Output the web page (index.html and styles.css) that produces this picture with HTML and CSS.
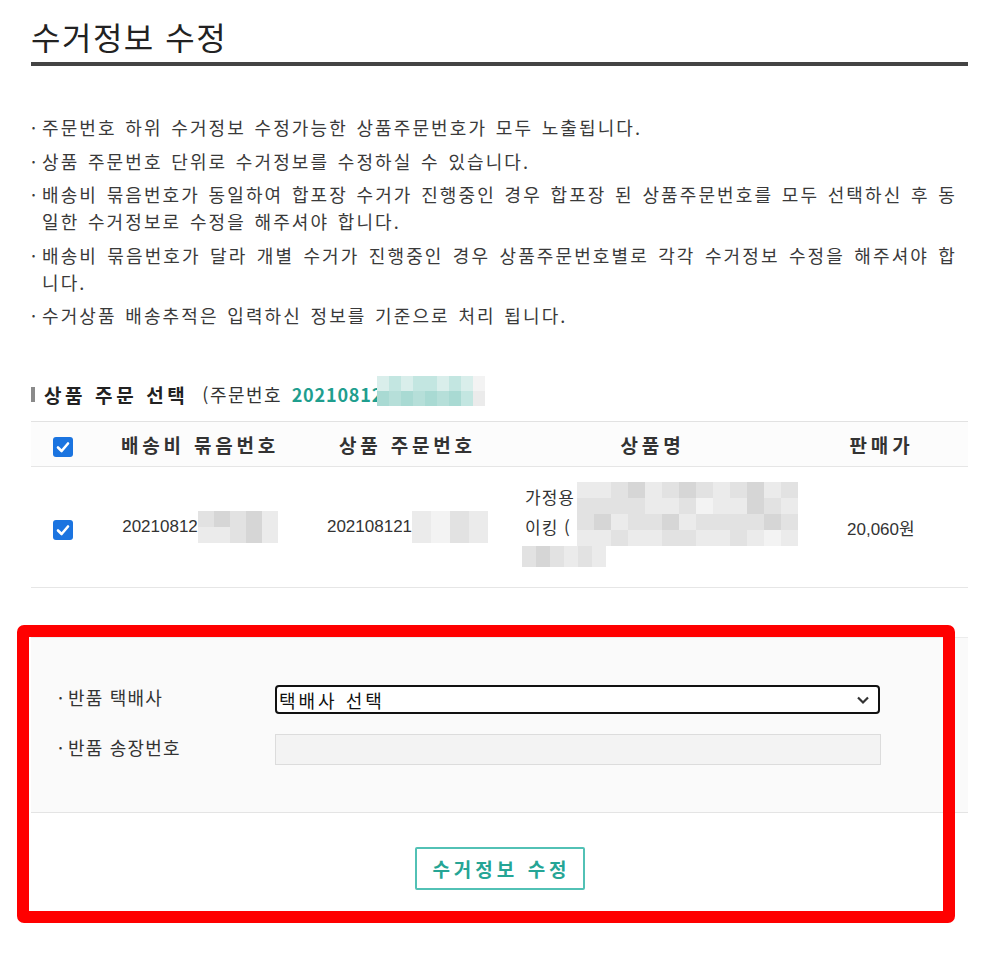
FILE: index.html
```html
<!DOCTYPE html>
<html lang="ko">
<head>
<meta charset="utf-8">
<title>수거정보 수정</title>
<link rel="stylesheet" href="styles.css">
</head>
<body>
<div class="page">
  <h1 class="title">수거정보 수정</h1>

  <ul class="notice">
    <li>주문번호 하위 수거정보 수정가능한 상품주문번호가 모두 노출됩니다.</li>
    <li>상품 주문번호 단위로 수거정보를 수정하실 수 있습니다.</li>
    <li><span class="full-line">배송비 묶음번호가 동일하여 합포장 수거가 진행중인 경우 합포장 된 상품주문번호를 모두 선택하신 후 동</span>일한 수거정보로 수정을 해주셔야 합니다.</li>
    <li><span class="full-line">배송비 묶음번호가 달라 개별 수거가 진행중인 경우 상품주문번호별로 각각 수거정보 수정을 해주셔야 합</span>니다.</li>
    <li>수거상품 배송추적은 입력하신 정보를 기준으로 처리 됩니다.</li>
  </ul>

  <h2 class="section-head">
    <span class="head-bar"></span>
    <span class="head-title">상품 주문 선택</span>
    <span class="order">(주문번호 <b class="order-no">20210812</b></span>
    <span class="mosaic mosaic-order">
      <i class="t1"></i><i class="t3"></i>
      <i class="t2"></i><i class="t4"></i>
      <i class="t1"></i><i class="t3"></i>
      <i class="t2"></i><i class="t4"></i>
      <i class="t2"></i><i class="t3"></i>
      <i class="t1"></i><i class="t4"></i>
      <i class="t2"></i><i class="t3"></i>
      <i class="t1"></i><i class="t2"></i>
      <i class="g0"></i><i class="g1"></i>
    </span>
  </h2>

  <table class="items">
    <colgroup>
      <col class="c-chk"><col class="c-bundle"><col class="c-order"><col class="c-name"><col class="c-price">
    </colgroup>
    <thead>
      <tr>
        <th><span class="chk"><svg viewBox="0 0 20 20" width="20" height="20"><path d="M5 10.5 L8.6 14 L15 6.5" fill="none" stroke="#fff" stroke-width="2.6" stroke-linecap="round" stroke-linejoin="round"/></svg></span></th>
        <th>배송비 묶음번호</th>
        <th>상품 주문번호</th>
        <th>상품명</th>
        <th>판매가</th>
      </tr>
    </thead>
    <tbody>
      <tr>
        <td><span class="chk"><svg viewBox="0 0 20 20" width="20" height="20"><path d="M5 10.5 L8.6 14 L15 6.5" fill="none" stroke="#fff" stroke-width="2.6" stroke-linecap="round" stroke-linejoin="round"/></svg></span></td>
        <td><span class="num">20210812</span><span class="mosaic mosaic-bundle">
          <i class="g2"></i><i class="g1"></i>
          <i class="g3"></i><i class="g1"></i>
          <i class="g2"></i><i class="g2"></i>
          <i class="g3"></i><i class="g3"></i>
          <i class="g1"></i><i class="g1"></i>
        </span></td>
        <td><span class="num">202108121</span><span class="mosaic mosaic-ord">
          <i class="g1"></i><i class="g1"></i>
          <i class="g0"></i><i class="g0"></i>
          <i class="g2"></i><i class="g2"></i>
          <i class="g1"></i><i class="g1"></i>
        </span></td>
        <td class="name-cell">
          <div class="name-box">가정용<br>이킹 (<br>&nbsp;
            <span class="mosaic mosaic-name">
              <i class="g1"></i><i class="g2"></i><i class="g2"></i><i class="g1"></i>
              <i class="g1"></i><i class="g2"></i><i class="g3"></i><i class="g1"></i>
              <i class="g2"></i><i class="g2"></i><i class="g1"></i><i class="g2"></i>
              <i class="g3"></i><i class="g2"></i><i class="g2"></i><i class="g1"></i>
              <i class="g1"></i><i class="g1"></i><i class="g2"></i><i class="g1"></i>
              <i class="g2"></i><i class="g1"></i><i class="g3"></i><i class="g2"></i>
              <i class="g3"></i><i class="g2"></i><i class="g1"></i><i class="g2"></i>
              <i class="g2"></i><i class="g0"></i><i class="g2"></i><i class="g1"></i>
              <i class="g1"></i><i class="g1"></i><i class="g2"></i><i class="g1"></i>
              <i class="g2"></i><i class="g1"></i><i class="g2"></i><i class="g2"></i>
              <i class="g3"></i><i class="g3"></i><i class="g2"></i><i class="g1"></i>
              <i class="g1"></i><i class="g2"></i><i class="g3"></i><i class="g0"></i>
              <i class="g2"></i><i class="g1"></i><i class="g2"></i><i class="g1"></i>
            </span>
            <span class="mosaic mosaic-name3">
              <i class="g2"></i><i class="g3"></i><i class="g2"></i><i class="g1"></i><i class="g2"></i><i class="g1"></i>
            </span>
          </div>
        </td>
        <td class="price">20,060원</td>
      </tr>
    </tbody>
  </table>

  <div class="form-area">
    <div class="form-panel">
      <div class="form-row">
        <label class="form-label" for="courier">반품 택배사</label>
        <div class="select-box" id="courier">
          <span>택배사 선택</span>
          <svg class="chevron" viewBox="0 0 14 10" width="14" height="10"><path d="M2 2.5 L7 7.5 L12 2.5" fill="none" stroke="#333" stroke-width="2.2"/></svg>
        </div>
      </div>
      <div class="form-row">
        <label class="form-label" for="invoice">반품 송장번호</label>
        <div class="input-box" id="invoice"></div>
      </div>
    </div>
    <div class="form-actions">
      <button class="btn-submit" type="button">수거정보 수정</button>
    </div>
    <div class="annotation"></div>
  </div>
</div>
</body>
</html>
```

FILE: styles.css
```css
* { box-sizing: border-box; }

body {
  margin: 0;
  background: #fff;
  color: #333;
  font-family: "Noto Sans CJK KR", "Noto Sans", sans-serif;
}

.page {
  width: 937px;
  margin-left: 31px;
  padding-top: 16px;
}

.title {
  margin: 0;
  font-size: 32px;
  font-weight: 400;
  letter-spacing: 1.5px;
  line-height: 40px;
  color: #222;
  padding-bottom: 6px;
  border-bottom: 4px solid #444;
}

.notice {
  list-style: none;
  margin: 48px 0 0 0;
  padding: 0 11px 0 11px;
  font-size: 18px;
  line-height: 27px;
  letter-spacing: 2.1px;
  word-spacing: 1.5px;
  color: #3a3a3a;
}

.notice li {
  position: relative;
  margin-bottom: 6.5px;
}

.notice li::before {
  content: "·";
  position: absolute;
  left: -11px;
  top: 0;
}

.full-line {
  display: block;
  text-align: justify;
  text-align-last: justify;
}

.section-head {
  margin: 50px 0 0 0;
  display: flex;
  align-items: center;
  height: 30px;
  font-size: 19px;
  font-weight: 400;
}

.head-bar {
  width: 4px;
  height: 15px;
  background: #8a8a8a;
  margin-right: 9px;
}

.head-title {
  font-weight: 700;
  letter-spacing: 3.6px;
  color: #222;
}

.order {
  margin-left: 14px;
  font-size: 18px;
  letter-spacing: 1.5px;
  color: #333;
}

.order-no {
  color: #1f9e8e;
  font-weight: 700;
  letter-spacing: 0.8px;
  margin-left: 3px;
}

.mosaic {
  display: inline-grid;
  grid-auto-flow: column;
  vertical-align: middle;
}

.mosaic i { display: block; }

.mosaic-order {
  grid-template-rows: repeat(2, 15px);
  grid-auto-columns: 12px;
  margin-top: -6px;
  margin-left: -6px;
}

.t1 { background: #d9eeeb; }
.t2 { background: #c3e6e1; }
.t3 { background: #a9dad3; }
.t4 { background: #b6dfd9; }
.g0 { background: #f3f3f3; }
.g1 { background: #ebebeb; }
.g2 { background: #e2e2e2; }
.g3 { background: #d6d6d6; }

.items {
  margin-top: 12px;
  width: 100%;
  border-collapse: collapse;
  table-layout: fixed;
}

.c-chk { width: 64px; }
.c-bundle { width: 210px; }
.c-order { width: 205px; }
.c-name { width: 285px; }
.c-price { width: 173px; }

.items th {
  height: 45px;
  background: #fcfcfc;
  border-top: 1px solid #e2e2e2;
  border-bottom: 1px solid #e6e6e6;
  font-size: 19px;
  font-weight: 700;
  letter-spacing: 3.8px;
  color: #333;
  text-align: center;
  vertical-align: middle;
  padding: 0;
}

.items td {
  height: 121px;
  border-bottom: 1px solid #e6e6e6;
  text-align: center;
  vertical-align: middle;
  padding: 0;
  font-size: 17px;
  color: #333;
}

.chk {
  display: inline-block;
  width: 20px;
  height: 20px;
  border-radius: 3px;
  background: #1b74e0;
  vertical-align: middle;
}

.chk svg { display: block; }

.num {
  font-family: "Liberation Sans", "Noto Sans", sans-serif;
  font-size: 17px;
  vertical-align: middle;
}

.mosaic-bundle {
  grid-template-rows: repeat(2, 16px);
  grid-auto-columns: 16px;
}

.mosaic-ord {
  grid-template-rows: repeat(2, 16px);
  grid-auto-columns: 19px;
}

.name-cell {
  text-align: left !important;
  padding-left: 15px !important;
}

.name-box {
  position: relative;
  line-height: 30px;
  font-size: 17px;
  letter-spacing: 1px;
}

.mosaic-name {
  position: absolute;
  left: 52px;
  top: 0;
  grid-template-rows: repeat(4, 16px);
  grid-auto-columns: 17px;
}

.mosaic-name3 {
  position: absolute;
  left: -3px;
  top: 64px;
  grid-template-rows: 21px;
  grid-auto-columns: 14px;
}

.price {
  font-family: "Liberation Sans", "Noto Sans CJK KR", sans-serif;
  text-align: left !important;
  padding-left: 52px !important;
}

.form-area {
  position: relative;
  margin-top: 49px;
}

.form-panel {
  background: #fafafa;
  border-top: 1px solid #ececec;
  border-bottom: 1px solid #e4e4e4;
  padding: 47px 88px 47px 27px;
  display: flex;
  flex-direction: column;
  gap: 20px;
}

.form-row {
  display: flex;
  align-items: center;
}

.form-label {
  width: 217px;
  font-size: 18px;
  letter-spacing: 1.2px;
  color: #333;
  margin-top: -6px;
}

.form-label::before {
  content: "·";
  display: inline-block;
  width: 10px;
}

.select-box {
  flex: 1;
  height: 29px;
  border: 2px solid #111;
  border-radius: 4px;
  background: #fff;
  display: flex;
  align-items: center;
  justify-content: space-between;
  padding: 0 8px 0 2px;
  font-size: 18px;
  letter-spacing: 3px;
  color: #111;
}

.input-box {
  flex: 1;
  height: 31px;
  background: #f3f3f3;
  border: 1px solid #dcdcdc;
  margin-right: -1px;
}

.form-actions {
  display: flex;
  justify-content: center;
  padding: 34px 0 33px;
}

.btn-submit {
  width: 170px;
  height: 43px;
  background: #fff;
  border: 2px solid #52c1b5;
  border-radius: 2px;
  color: #25a595;
  font-family: "Noto Sans CJK KR", sans-serif;
  font-size: 19px;
  font-weight: 700;
  letter-spacing: 4px;
  padding: 0 0 0 4px;
}

.annotation {
  position: absolute;
  left: -14px;
  top: -12px;
  width: 938px;
  height: 298px;
  border: 12px solid #ff0000;
  border-radius: 7px;
  pointer-events: none;
}
```
